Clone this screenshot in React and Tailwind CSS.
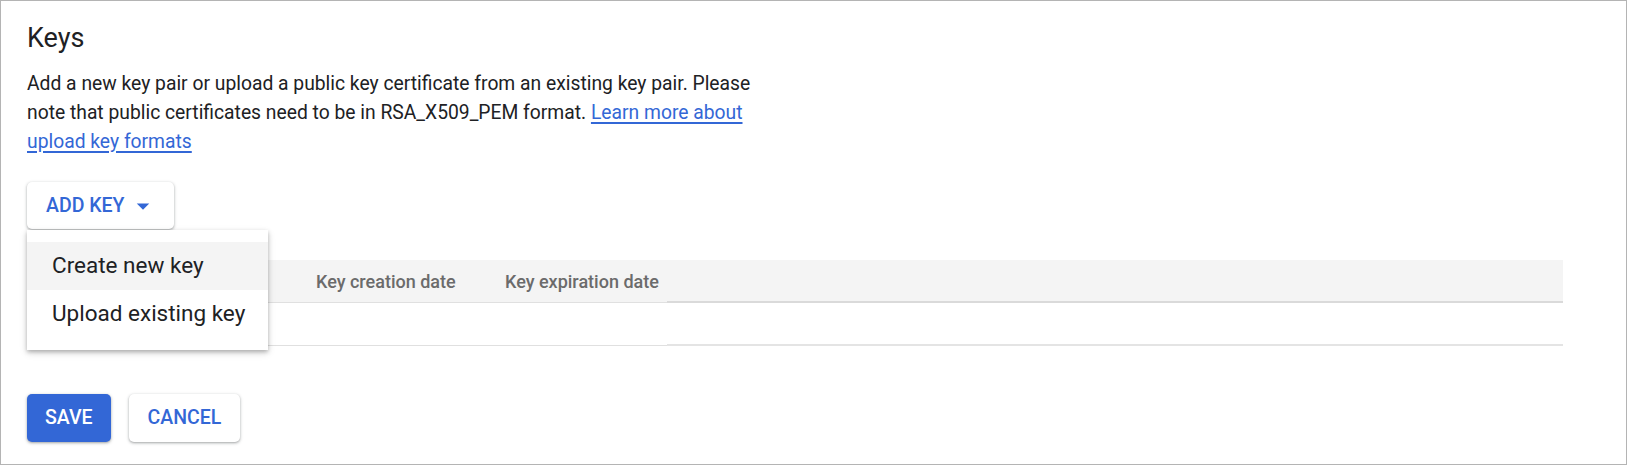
import React from 'react';

const ArrowDrop = () => (
    <svg viewBox="0 0 24 24" className="w-[30px] h-[30px] ml-[3px]" fill="currentColor">
        <path d="M7 10l5 5 5-5z" />
    </svg>
);

const raised = 'shadow-[0_1px_2px_rgba(60,64,67,0.3),0_1px_3px_1px_rgba(60,64,67,0.15)]';

const KeysPanel = () => {
    return (
        <div className="relative w-[1627px] h-[465px] border border-[#b4b4b4] bg-white pl-[26px] pt-[21px] font-['Roboto',sans-serif] text-[#202124]">
            <h2 className="text-[27px] leading-[32px] font-normal">Keys</h2>

            <p className="w-[740px] mt-[15px] text-[19.3px] leading-[29px]">
                Add a new key pair or upload a public key certificate from an existing key pair. Please note that public certificates need to be in RSA_X509_PEM format.{' '}
                <a href="#" className="text-[#3367d6] underline decoration-2 underline-offset-[3px]">Learn more about upload key formats</a>
            </p>

            {/* Add key with open menu */}
            <div className="relative mt-[26px] w-fit">
                <button className={`flex items-center h-[47px] pl-[19px] pr-[16px] rounded-[5px] bg-white text-[#3367d6] text-[19.5px] font-medium ${raised}`}>
                    ADD KEY
                    <ArrowDrop />
                </button>
                <div className="absolute left-0 top-[48px] z-10 w-[241px] py-[12px] bg-white shadow-[0_2px_4px_rgba(0,0,0,0.25),0_3px_8px_rgba(0,0,0,0.12)]">
                    <div className="h-[48px] flex items-center px-[25px] bg-[#f4f4f4] text-[22.5px] whitespace-nowrap">Create new key</div>
                    <div className="h-[48px] flex items-center px-[25px] text-[22.5px] whitespace-nowrap">Upload existing key</div>
                </div>
            </div>

            {/* Keys table (first column sits under the open menu) */}
            <div className="mt-[31px] w-[1536px] text-[18px]">
                <div className="grid grid-cols-[268px_189px_183px_1fr] h-[43px] bg-[#f4f4f4] font-medium text-[#6b6b6b] whitespace-nowrap">
                    <div className="border-b border-[#e0e0e0]"></div>
                    <div className="flex items-center pl-[21px] border-b border-[#e0e0e0]">Key creation date</div>
                    <div className="flex items-center pl-[21px] border-b border-[#e0e0e0]">Key expiration date</div>
                    <div className="border-b-2 border-[#dadada]"></div>
                </div>
                <div className="grid grid-cols-[268px_189px_183px_1fr] h-[43px]">
                    <div className="border-b border-[#e0e0e0]"></div>
                    <div className="border-b border-[#e0e0e0]"></div>
                    <div className="border-b border-[#e0e0e0]"></div>
                    <div className="border-b-2 border-[#e4e4e4]"></div>
                </div>
            </div>

            <div className="flex gap-[18px] mt-[48px]">
                <button className={`h-[48px] px-[18px] rounded-[5px] bg-[#3367d6] text-white text-[19.5px] font-medium ${raised}`}>SAVE</button>
                <button className={`h-[48px] px-[19px] rounded-[5px] bg-white text-[#3367d6] text-[19.5px] font-medium ${raised}`}>CANCEL</button>
            </div>
        </div>
    );
};

export default function App() {
    return <KeysPanel />;
}
